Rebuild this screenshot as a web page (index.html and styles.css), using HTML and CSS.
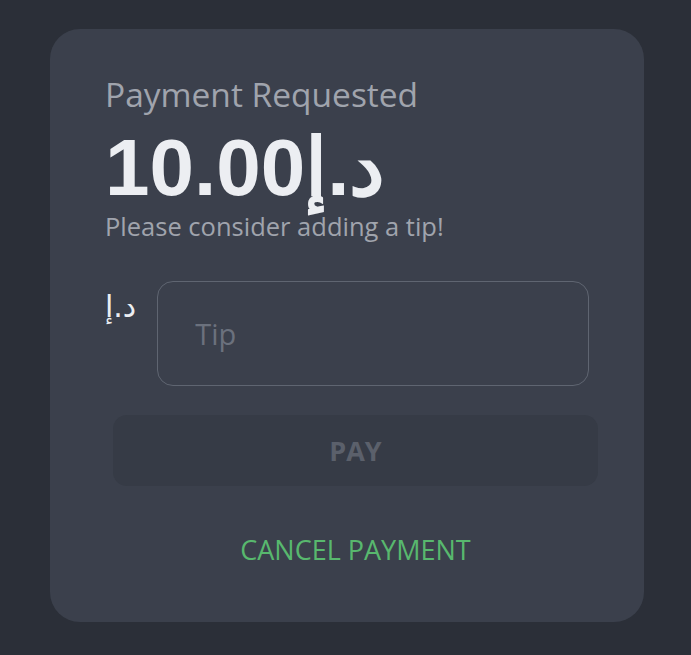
FILE: index.html
```html
<!DOCTYPE html>
<html lang="en">
<head>
    <meta charset="UTF-8">
    <title>Payment Requested</title>
    <link rel="stylesheet" href="styles.css">
</head>
<body>
    <!-- PAYMENT CARD -->
    <div class="payment-card">
        <div class="request-info">
            <div class="request-title">Payment Requested</div>
            <div class="request-amount">10.00د.إ</div>
            <div class="request-note">Please consider adding a tip!</div>
        </div>

        <div class="tip-row">
            <span class="tip-currency">د.إ</span>
            <input type="text" class="tip-input" placeholder="Tip">
        </div>

        <button class="pay-button" disabled>PAY</button>
        <button class="cancel-button">CANCEL PAYMENT</button>
    </div>
</body>
</html>
```

FILE: styles.css
```css
:root {
    --page-bg: #2b2f38;
    --card-bg: #3b404c;
    --muted-text: #a0a4ad;
    --accent-green: #58b86e;
}

body {
    margin: 0;
    font-family: 'Open Sans', 'Noto Sans', sans-serif;
    background-color: var(--page-bg);
    min-height: 100vh;
}

/* CARD */
.payment-card {
    width: 594px;
    height: 593px;
    box-sizing: border-box;
    margin: 29px 0 0 50px;
    padding: 43px 55px 0 55px;
    background: var(--card-bg);
    border-radius: 30px;
    display: flex;
    flex-direction: column;
}

.request-title {
    font-size: 33.5px;
    line-height: 44px;
    color: var(--muted-text);
}

.request-amount {
    margin-top: 10px;
    font-family: 'Liberation Sans', Arial, sans-serif;
    font-weight: bold;
    font-size: 80px;
    line-height: 84px;
    color: #eceef2;
    letter-spacing: 1px;
}

.request-note {
    font-size: 25.5px;
    line-height: 32px;
    color: var(--muted-text);
}

/* TIP INPUT */
.tip-row {
    display: flex;
    align-items: flex-start;
    gap: 21px;
    margin-top: 39px;
}

.tip-currency {
    font-family: 'DejaVu Sans', sans-serif;
    font-size: 30px;
    line-height: 40px;
    color: #eceef2;
    margin-top: 6px;
}

.tip-input {
    flex: 1;
    width: 0;
    min-width: 0;
    height: 105px;
    box-sizing: border-box;
    background: transparent;
    border: 1.5px solid #5f6571;
    border-radius: 16px;
    padding: 0 37px;
    font-family: inherit;
    font-size: 29px;
    color: #eceef2;
    outline: none;
}

.tip-input::placeholder {
    color: #6b717d;
}

/* BUTTONS */
.pay-button {
    margin: 29px -9px 0 8px;
    height: 71px;
    border: none;
    border-radius: 14px;
    background: #363b46;
    color: #5b606b;
    font-family: inherit;
    font-weight: bold;
    font-size: 27px;
}

.cancel-button {
    margin: 47px -9px 0 8px;
    padding: 0;
    background: none;
    border: none;
    color: var(--accent-green);
    font-family: inherit;
    font-weight: 500;
    font-size: 27px;
    line-height: 34px;
    cursor: pointer;
}
```
